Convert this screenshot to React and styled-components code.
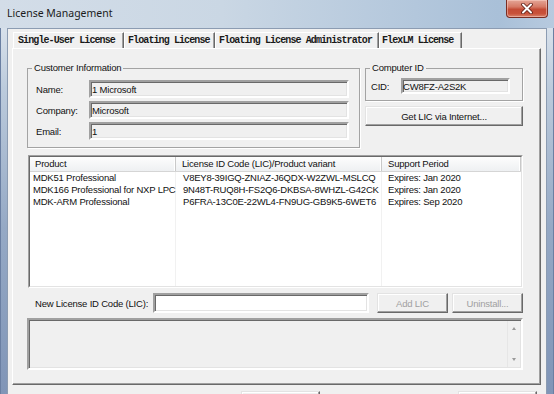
import React from 'react';
import styled, { createGlobalStyle, css } from 'styled-components';

const Global = createGlobalStyle`
  html, body { margin: 0; padding: 0; background: #f0f0f0; }
  body { width: 554px; height: 394px; overflow: hidden; }
  #root { width: 554px; height: 394px; }
  *, *::before, *::after { box-sizing: border-box; }
`;

const SANS = `"Liberation Sans", Arial, sans-serif`;
const MONO = `"Liberation Mono", "Courier New", monospace`;

const Window = styled.div`
  width: 554px;
  height: 394px;
  display: flex;
  flex-direction: column;
  overflow: hidden;
  font-family: ${SANS};
  font-size: 9.5px;
  letter-spacing: -0.2px;
  color: #000;
`;

const TitleBar = styled.div`
  height: 28px;
  flex: none;
  display: flex;
  justify-content: space-between;
  align-items: flex-start;
  padding: 0 6px 0 7px;
  background: linear-gradient(to right, #d3dde8 0%, #cad7e4 40%, #b3c7dc 75%, #a9c0d8 90%, #b7cadf 100%);
`;

const Title = styled.div`
  font-family: "Noto Sans", "Open Sans", sans-serif;
  font-size: 10.5px;
  letter-spacing: 0;
  line-height: 14px;
  margin-top: 6px;
  color: #1b1b1b;
`;

const CloseButton = styled.div`
  width: 42px;
  height: 18px;
  border: 1px solid #7a2d22;
  border-top: none;
  border-radius: 0 0 4px 4px;
  background: linear-gradient(to bottom, #e4a697 0%, #d67a66 40%, #c44c36 55%, #c9523a 80%, #d8846d 100%);
  box-shadow: inset 0 0 0 1px rgba(255, 220, 210, 0.45);
  display: flex;
  align-items: center;
  justify-content: center;
`;

const Body = styled.div`
  flex: 1;
  min-height: 0;
  display: flex;
`;

const FrameSide = styled.div`
  width: 7px;
  flex: none;
  background: linear-gradient(to bottom, #d8e1eb 0px, #bccbdc 60px, #95a9c5 200px, #8095b7 366px);
  border-${p => (p.$right ? 'right' : 'left')}: 1px solid #6a7fa2;
`;

const Client = styled.div`
  flex: 1;
  min-width: 0;
  background: #f0f0f0;
  border: 1px solid #8c9cb2;
  border-bottom: none;
  display: flex;
  flex-direction: column;
  padding: 3px 5px 0 4px;
`;

const TabStrip = styled.div`
  height: 16px;
  flex: none;
  display: flex;
  padding-left: 1px;
`;

const Tab = styled.div`
  width: ${p => p.$w}px;
  height: 16px;
  padding-left: ${p => p.$pad}px;
  border-top: 1px solid #fff;
  border-left: 1px solid #fff;
  border-right: 1px solid #696969;
  box-shadow: inset -1px 0 0 #a0a0a0;
  font-family: ${MONO};
  font-size: 10px;
  font-weight: bold;
  letter-spacing: -0.9px;
  line-height: 15px;
  white-space: nowrap;
  color: #1a1a1a;
  background: #f0f0f0;
`;

const Panel = styled.div`
  height: 337px;
  flex: none;
  border: 1px solid;
  border-color: #fff #696969 #696969 #fff;
  box-shadow: inset -1px -1px 0 #a0a0a0;
  padding: 13px 17px 0 14px;
  display: flex;
  flex-direction: column;
`;

const TopRow = styled.div`
  display: grid;
  grid-template-columns: 333px 158px;
  column-gap: 5px;
  align-items: start;
`;

const Group = styled.fieldset`
  margin: 0;
  padding: 0;
  min-width: 0;
  border: 1px solid #a3a3a3;
  box-shadow: 1px 1px 0 #fff;
`;

const Legend = styled.legend`
  margin-left: 4px;
  padding: 0 2px;
  line-height: 12px;
  font-size: 9.5px;
  color: #111;
`;

const FormGrid = styled.div`
  display: grid;
  grid-template-columns: ${p => p.$label}px 1fr;
  grid-auto-rows: ${p => p.$row}px;
  row-gap: 3px;
  align-items: center;
  padding: ${p => p.$pad};
`;

const Label = styled.div`
  white-space: nowrap;
  color: #111;
`;

const Field = styled.div`
  height: 100%;
  border: 2px solid;
  border-color: #a0a0a0 #fff #fff #a0a0a0;
  box-shadow: inset 1px 1px 0 #696969, inset -1px -1px 0 #e3e3e3;
  background: ${p => (p.$white ? '#fff' : '#f0f0f0')};
  padding: 0 2px 0 ${p => p.$pl ?? 1}px;
  display: flex;
  align-items: center;
  white-space: nowrap;
  overflow: hidden;
  color: #111;
`;

const RightCol = styled.div`
  display: flex;
  flex-direction: column;
  gap: 5px;
`;

const Button = styled.div`
  height: ${p => p.$h || 20}px;
  width: ${p => (p.$w ? `${p.$w}px` : 'auto')};
  margin-left: ${p => p.$ml || 0}px;
  flex: none;
  border: 1px solid;
  border-color: #e3e3e3 #696969 #696969 #e3e3e3;
  box-shadow: inset -1px -1px 0 #a0a0a0, inset 1px 1px 0 #fff;
  background: #f0f0f0;
  display: flex;
  align-items: center;
  justify-content: center;
  white-space: nowrap;
  color: ${p => (p.$disabled ? '#a0a0a0' : '#111')};
`;

const ListFrame = styled.div`
  margin: 7px 0 0 1px;
  height: 133px;
  flex: none;
  border: 1px solid;
  border-color: #a0a0a0 #fff #fff #a0a0a0;
  display: flex;
`;

const ListInner = styled.div`
  flex: 1;
  min-width: 0;
  border: 1px solid;
  border-color: #696969 #e3e3e3 #e3e3e3 #696969;
  background: #fff;
  display: flex;
  flex-direction: column;
`;

const COLS = '146px 206px 1fr';

const ListHeader = styled.div`
  display: grid;
  grid-template-columns: ${COLS};
  height: 15px;
  flex: none;
  background: linear-gradient(to bottom, #fdfdfd, #eef0f2);
  border-bottom: 1px solid #d5d5d5;
`;

const HeaderCell = styled.div`
  padding-left: ${p => p.$pad}px;
  line-height: 14px;
  border-right: 1px solid #c9c9c9;
  box-shadow: inset -1px 0 0 #fff;
  white-space: nowrap;
  overflow: hidden;
  color: #111;
`;

const ListBody = styled.div`
  flex: 1;
  background:
    linear-gradient(to right, transparent 145px, #f1f1f1 145px, #f1f1f1 146px, transparent 146px,
      transparent 351px, #f1f1f1 351px, #f1f1f1 352px, transparent 352px);
`;

const Row = styled.div`
  display: grid;
  grid-template-columns: ${COLS};
  height: 12px;
`;

const Cell = styled.div`
  padding-left: ${p => p.$pad}px;
  line-height: 12px;
  white-space: nowrap;
  overflow: hidden;
  color: #111;
`;

const LicRow = styled.div`
  margin-top: 5px;
  height: 20px;
  flex: none;
  display: flex;
  align-items: stretch;
`;

const LicLabel = styled.div`
  width: 126px;
  flex: none;
  padding-left: 8px;
  display: flex;
  align-items: center;
  white-space: nowrap;
  color: #111;
`;

const LicInput = styled(Field)`
  width: 216px;
  flex: none;
`;

const Memo = styled.div`
  margin-top: 5px;
  height: 52px;
  flex: none;
  border: 2px solid;
  border-color: #a0a0a0 #fff #fff #a0a0a0;
  box-shadow: inset 1px 1px 0 #696969, inset -1px -1px 0 #e3e3e3;
  background: #f0f0f0;
  display: flex;
  justify-content: flex-end;
`;

const ScrollTrack = styled.div`
  width: 13px;
  margin: 1px 1px 1px 0;
  border-left: 1px solid #e6e6e6;
  display: flex;
  flex-direction: column;
  justify-content: space-between;
  align-items: center;
  padding: 6px 0 6px;
`;

const Arrow = styled.div`
  width: 0;
  height: 0;
  border-left: 2.5px solid transparent;
  border-right: 2.5px solid transparent;
  ${p =>
    p.$down
      ? css`border-top: 3px solid #9a9a9a;`
      : css`border-bottom: 3px solid #9a9a9a;`}
`;

const Footer = styled.div`
  margin-top: 6px;
  display: flex;
  justify-content: space-between;
  padding: 0 4px 0 229px;
`;

const tabs = [
  { label: 'Single-User License', w: 111, pad: 4, active: true },
  { label: 'Floating License', w: 91, pad: 3 },
  { label: 'Floating License Administrator', w: 164, pad: 3 },
  { label: 'FlexLM License', w: 83, pad: 2 },
];

const headerCols = [
  { label: 'Product', pad: 5 },
  { label: 'License ID Code (LIC)/Product variant', pad: 6 },
  { label: 'Support Period', pad: 6 },
];
const rowPads = [3, 7, 6];

const rows = [
  ['MDK51 Professional', 'V8EY8-39IGQ-ZNIAZ-J6QDX-W2ZWL-MSLCQ', 'Expires: Jan 2020'],
  ['MDK166 Professional for NXP LPC', '9N48T-RUQ8H-FS2Q6-DKBSA-8WHZL-G42CK', 'Expires: Jan 2020'],
  ['MDK-ARM Professional', 'P6FRA-13C0E-22WL4-FN9UG-GB9K5-6WET6', 'Expires: Sep 2020'],
];

function CloseX() {
  return (
    <svg width="14" height="11" viewBox="0 0 14 11">
      <path d="M3 1.5 L11 9.5 M11 1.5 L3 9.5" stroke="#5a1a12" strokeWidth="3.6" strokeLinecap="round" />
      <path d="M3 1.5 L11 9.5 M11 1.5 L3 9.5" stroke="#ffffff" strokeWidth="2" strokeLinecap="round" />
    </svg>
  );
}

export default function App() {
  return (
    <>
      <Global />
      <Window>
        <TitleBar>
          <Title>License Management</Title>
          <CloseButton>
            <CloseX />
          </CloseButton>
        </TitleBar>
        <Body>
          <FrameSide />
          <Client>
            <TabStrip>
              {tabs.map(t => (
                <Tab key={t.label} $w={t.w} $pad={t.pad} $active={t.active}>
                  {t.label}
                </Tab>
              ))}
            </TabStrip>
            <Panel>
              <TopRow>
                <Group>
                  <Legend>Customer Information</Legend>
                  <FormGrid $label={53} $row={18} $pad="6px 10px 7px 8px">
                    <Label>Name:</Label>
                    <Field>1 Microsoft</Field>
                    <Label>Company:</Label>
                    <Field>Microsoft</Field>
                    <Label>Email:</Label>
                    <Field>1</Field>
                  </FormGrid>
                </Group>
                <RightCol>
                  <Group>
                    <Legend>Computer ID</Legend>
                    <FormGrid $label={30} $row={16} $pad="4px 12px 6px 5px">
                      <Label>CID:</Label>
                      <Field $pl={0}>CW8FZ-A2S2K</Field>
                    </FormGrid>
                  </Group>
                  <Button>Get LIC via Internet...</Button>
                </RightCol>
              </TopRow>

              <ListFrame>
                <ListInner>
                  <ListHeader>
                    {headerCols.map(c => (
                      <HeaderCell key={c.label} $pad={c.pad}>
                        {c.label}
                      </HeaderCell>
                    ))}
                  </ListHeader>
                  <ListBody>
                    {rows.map(r => (
                      <Row key={r[0]}>
                        {r.map((v, i) => (
                          <Cell key={i} $pad={rowPads[i]}>
                            {v}
                          </Cell>
                        ))}
                      </Row>
                    ))}
                  </ListBody>
                </ListInner>
              </ListFrame>

              <LicRow>
                <LicLabel>New License ID Code (LIC):</LicLabel>
                <LicInput $white />
                <Button $w={71} $ml={8} $disabled>
                  Add LIC
                </Button>
                <Button $w={71} $ml={4} $disabled>
                  Uninstall...
                </Button>
              </LicRow>

              <Memo>
                <ScrollTrack>
                  <Arrow />
                  <Arrow $down />
                </ScrollTrack>
              </Memo>
            </Panel>
            <Footer>
              <Button $w={79} $h={23} />
              <Button $w={79} $h={23} />
            </Footer>
          </Client>
          <FrameSide $right />
        </Body>
      </Window>
    </>
  );
}
